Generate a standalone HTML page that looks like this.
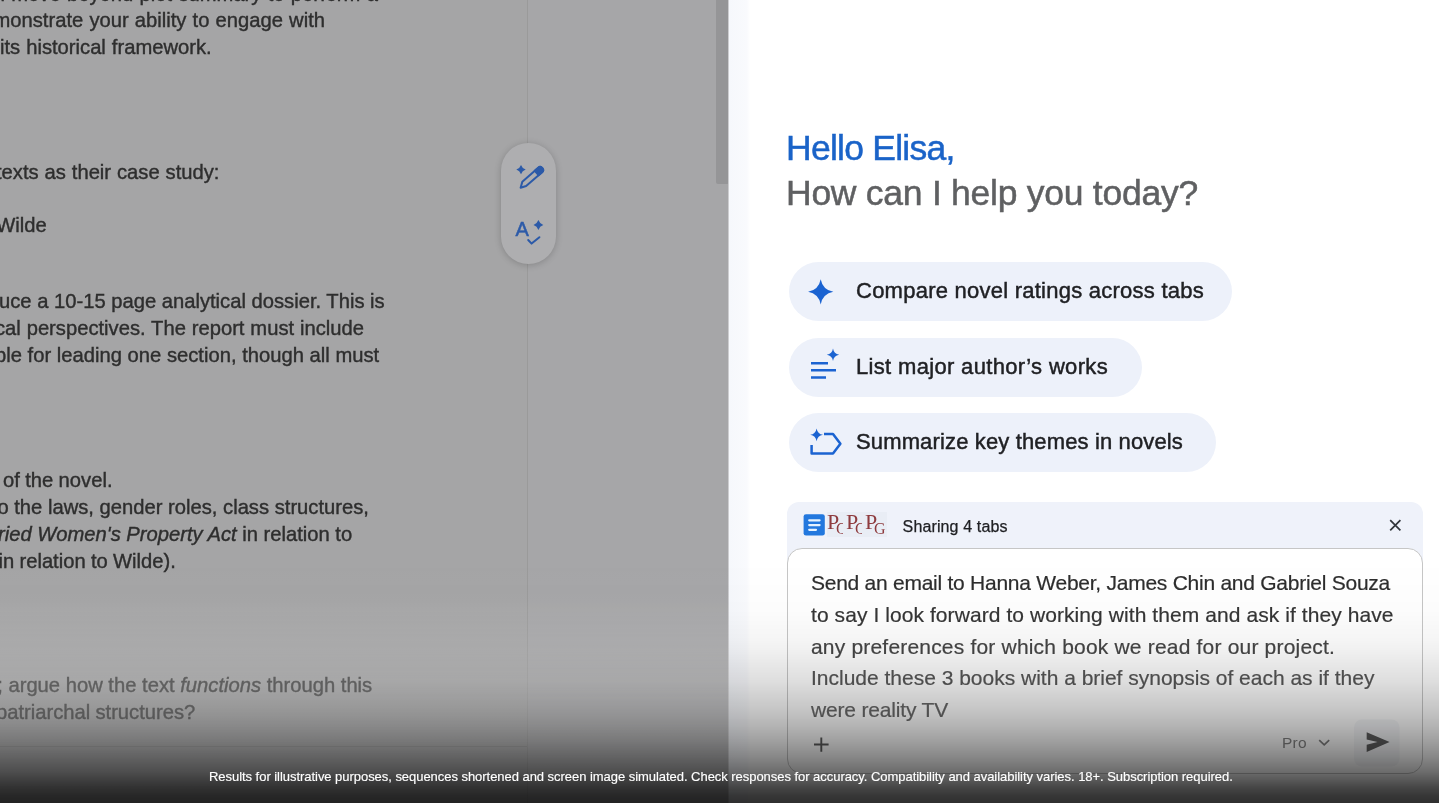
<!DOCTYPE html>
<html>
<head>
<meta charset="utf-8">
<style>
*{margin:0;padding:0;box-sizing:border-box;}
html,body{width:1439px;height:803px;overflow:hidden;background:#a5a5a6;font-family:"Liberation Sans",sans-serif;}
#root{position:absolute;left:0;top:0;width:1439px;height:803px;overflow:hidden;}
.h1,.chip,#share,#input,#cap,#pro,#pillicons{will-change:transform;}
/* LEFT DOCUMENT */
#doc{position:absolute;left:0;top:0;width:729px;height:803px;background:#a5a5a6;overflow:hidden;}
#doc .side{position:absolute;left:528px;top:0;width:201px;height:803px;background:#a6a6a8;}
#doc .vline{position:absolute;left:527px;top:0;width:1px;height:803px;background:#9a9a9a;}
#doc .scroll{position:absolute;left:715.5px;top:-10px;width:13px;height:193.5px;background:#959597;border-radius:2px;}
#doctext{position:absolute;left:0;top:0;width:528px;height:803px;filter:blur(0.75px);}
.dl{position:absolute;white-space:nowrap;font-size:20.2px;line-height:27px;color:#2e2e2e;-webkit-text-stroke:0.4px #2e2e2e;height:27px;}
.dl i{font-style:italic;}
#pill{position:absolute;left:501px;top:143px;width:55px;height:121px;border-radius:28px;background:#aeaeb0;box-shadow:0 1px 7px rgba(0,0,0,0.2);}
/* RIGHT PANEL */
#panel{position:absolute;left:729px;top:0;width:710px;height:803px;background:#ffffff;}
#panel .edge{position:absolute;left:0;top:0;width:21px;height:803px;background:linear-gradient(to right,#f6f8fc 0,#f9fafd 85%,#ffffff 100%);}
.h1{position:absolute;left:786px;white-space:nowrap;font-size:35.5px;line-height:44px;height:44px;-webkit-text-stroke:0.5px currentColor;}
.chip{position:absolute;left:789px;height:59px;border-radius:30px;background:#edf1fa;}
.chip span{position:absolute;left:67px;top:-1px;line-height:59px;font-size:22px;color:#202124;white-space:nowrap;-webkit-text-stroke:0.45px #202124;}
.chip svg{position:absolute;}
#share{position:absolute;left:787px;top:502px;width:636px;height:62px;border-radius:12px 12px 0 0;background:#eff2fa;}
#share .t{position:absolute;left:115.6px;top:1px;line-height:47px;font-size:16px;letter-spacing:0.129px;color:#202124;white-space:nowrap;-webkit-text-stroke:0.25px #202124;}
.pg{position:absolute;top:10px;height:26px;overflow:hidden;font-family:"Liberation Serif",serif;color:#8e3b3e;}
.pg b{position:absolute;left:3px;top:-3px;font-weight:normal;font-size:22px;line-height:26px;}
.pg i{position:absolute;left:12px;top:6px;font-style:normal;font-size:16px;line-height:22px;}
#input{position:absolute;left:787px;top:548px;width:636px;height:226px;border-radius:15px;background:#fff;border:1px solid #c6c6c6;}
.il{position:absolute;left:23px;white-space:nowrap;font-size:21px;line-height:32px;height:32px;color:#444746;}
#pro{position:absolute;left:1281.5px;top:734px;font-size:15.5px;line-height:18px;color:#858585;letter-spacing:0.2px;}
#fade{position:absolute;left:0;top:560px;width:1439px;height:243px;pointer-events:none;
background:linear-gradient(to bottom,rgba(0,0,0,0) 0.0%,rgba(0,0,0,0.01) 20.58%,rgba(0,0,0,0.04) 32.92%,rgba(0,0,0,0.06) 37.45%,rgba(0,0,0,0.13) 49.79%,rgba(0,0,0,0.23) 62.14%,rgba(0,0,0,0.3) 68.72%,rgba(0,0,0,0.38) 74.9%,rgba(0,0,0,0.47) 81.07%,rgba(0,0,0,0.575) 87.24%,rgba(0,0,0,0.72) 93.42%,rgba(0,0,0,0.79) 97.12%,rgba(0,0,0,0.81) 100.0%);}
#dfade{position:absolute;left:0;top:560px;width:729px;height:243px;pointer-events:none;
background:linear-gradient(to bottom,rgba(255,255,255,0) 0.0%,rgba(255,255,255,0.02) 16.46%,rgba(255,255,255,0.13) 32.92%,rgba(255,255,255,0.3) 49.38%,rgba(255,255,255,0.34) 57.61%,rgba(255,255,255,0.34) 65.84%,rgba(255,255,255,0.3) 74.07%,rgba(255,255,255,0.22) 82.3%,rgba(255,255,255,0.18) 90.53%,rgba(255,255,255,0.2) 100.0%);}
#cap{position:absolute;left:209.2px;top:769px;-webkit-text-stroke:0.15px #fff;letter-spacing:-0.042px;font-size:13px;line-height:16px;color:#fff;white-space:nowrap;}
</style>
</head>
<body>
<div id="root">
  <div id="doc">
    <div class="side"></div>
    <div class="vline"></div>
    <div class="scroll"></div>
    <div style="position:absolute;left:728px;top:0;width:1px;height:803px;background:#cdcdd0;"></div>
    <div style="position:absolute;left:0;top:746px;width:527px;height:1px;background:rgba(0,0,0,0.10);"></div>
    <div id="doctext">
      <div class="dl" style="left:-4px;top:-19.4px;word-spacing:0.71px;">ll move beyond plot summary to perform a</div>
      <div class="dl" style="left:-6.5px;top:7px;word-spacing:0.54px;">monstrate your ability to engage with</div>
      <div class="dl" style="left:0px;top:34px;word-spacing:0.4px;">its historical framework.</div>
      <div class="dl" style="left:-4px;top:159px;word-spacing:0.31px;">texts as their case study:</div>
      <div class="dl" style="left:-3.8px;top:212px;word-spacing:0px;">Wilde</div>
      <div class="dl" style="left:-1px;top:288px;word-spacing:0.0px;">uce a 10-15 page analytical dossier. This is</div>
      <div class="dl" style="left:-5px;top:315px;word-spacing:0.25px;">cal perspectives. The report must include</div>
      <div class="dl" style="left:-5px;top:342px;word-spacing:0.05px;">ble for leading one section, though all must</div>
      <div class="dl" style="left:3px;top:467px;word-spacing:-0.25px;">of the novel.</div>
      <div class="dl" style="left:-2.6px;top:494px;word-spacing:0.02px;">o the laws, gender roles, class structures,</div>
      <div class="dl" style="left:-2px;top:521px;word-spacing:-0.02px;"><i>ried Women's Property Act</i> in relation to</div>
      <div class="dl" style="left:-1.5px;top:548px;word-spacing:-0.37px;">in relation to Wilde).</div>
      <div class="dl" style="left:-2.8px;top:672px;word-spacing:0.02px;">; argue how the text <i>functions</i> through this</div>
      <div class="dl" style="left:-4px;top:699px;word-spacing:-0.42px;">patriarchal structures?</div>
    </div>
    <div id="pill"></div>
      <svg id="pillicons" style="position:absolute;left:495px;top:135px;" width="70" height="135" viewBox="495 135 70 135">
    <g fill="none" stroke="#2c5aa8" stroke-width="2" stroke-linecap="round" stroke-linejoin="round">
      <g transform="translate(531.4,177.6) rotate(-41)">
        <path d="M-14.8,0.6 L-9.5,-2.9 L11.6,-2.9 A2.9,2.9 0 0 1 11.6,2.9 L-9.5,2.9 Z"/>
        <path d="M7,-2.9 L11.6,-2.9 A2.9,2.9 0 0 1 11.6,2.9 L7,2.9 Z" fill="#2c5aa8"/>
      </g>
      <polyline points="528.2,240 531.6,243.6 539.4,237.2"/>
    </g>
    <path d="M521,164.9 Q522.22,168.38 525.7,169.6 Q522.22,170.82 521,174.29999999999998 Q519.78,170.82 516.3,169.6 Q519.78,168.38 521,164.9Z" fill="#2c5aa8"/>
    <path d="M538.4,220.1 Q539.67,223.73 543.3,225 Q539.67,226.27 538.4,229.9 Q537.13,226.27 533.5,225 Q537.13,223.73 538.4,220.1Z" fill="#2c5aa8"/>
    <text x="515.6" y="236.2" font-family="Liberation Sans, sans-serif" font-size="20" fill="#2c5aa8" stroke="#2c5aa8" stroke-width="0.5">A</text>
  </svg>
    <div id="dfade"></div>
  </div>

  <div id="panel"><div class="edge"></div></div>

  <div class="h1" id="h1a" style="top:126px;color:#1a63c8;letter-spacing:-0.75px;">Hello Elisa,</div>
  <div class="h1" id="h1b" style="top:171px;color:#5f6062;letter-spacing:-0.26px;">How can I help you today?</div>

  <div class="chip" id="c1" style="top:262px;width:443px;"><span style="letter-spacing:0.244px">Compare novel ratings across tabs</span></div>
  <div class="chip" id="c2" style="top:338px;width:353px;"><span style="letter-spacing:0.331px">List major author’s works</span></div>
  <div class="chip" id="c3" style="top:413px;width:427px;"><span style="letter-spacing:0.14px">Summarize key themes in novels</span></div>

  <div id="share"><div style="position:absolute;left:40px;top:10px;width:60px;height:25px;background:rgba(120,130,140,0.045);"></div><div class="pg" style="left:37px;width:19px;"><b>P</b><i>G</i></div><div class="pg" style="left:56px;width:19px;"><b>P</b><i>G</i></div><div class="pg" style="left:75px;width:25px;"><b>P</b><i>G</i></div><div class="t">Sharing 4 tabs</div></div>
  <div id="input">
    <div class="il" id="il1" style="top:18.4px;color:#2e2e2e;-webkit-text-stroke:0.2px #2e2e2e;letter-spacing:-0.255px;">Send an email to Hanna Weber, James Chin and Gabriel Souza</div>
    <div class="il" id="il2" style="top:49.9px;color:#363636;-webkit-text-stroke:0.2px #363636;letter-spacing:0.075px;">to say I look forward to working with them and ask if they have</div>
    <div class="il" id="il3" style="top:81.5px;color:#464646;-webkit-text-stroke:0.2px #464646;letter-spacing:0.189px;">any preferences for which book we read for our project.</div>
    <div class="il" id="il4" style="top:113px;color:#585858;-webkit-text-stroke:0.2px #585858;letter-spacing:-0.007px;">Include these 3 books with a brief synopsis of each as if they</div>
    <div class="il" id="il5" style="top:144.5px;color:#6a6a6a;-webkit-text-stroke:0.2px #6a6a6a;letter-spacing:-0.178px;">were reality TV</div>
  </div>

    <svg id="icons" style="position:absolute;left:780px;top:250px;" width="659" height="553" viewBox="780 250 659 553">
    <!-- chip 1 sparkle -->
    <path d="M820.7,279.2 Q822.716,289.784 833.3000000000001,291.8 Q822.716,293.81600000000003 820.7,304.40000000000003 Q818.6840000000001,293.81600000000003 808.1,291.8 Q818.6840000000001,289.784 820.7,279.2Z" fill="#1b63d1"/>
    <!-- chip 2: list + sparkle -->
    <g stroke="#1b63d1" stroke-width="2.5" stroke-linecap="butt" fill="none">
      <path d="M811,363.2 H828 M811,370.3 H836 M811,377.5 H826"/>
    </g>
    <path d="M833,348.6 Q833.868,353.932 839.2,354.8 Q833.868,355.668 833,361.0 Q832.132,355.668 826.8,354.8 Q832.132,353.932 833,348.6Z" fill="#1b63d1"/>
    <!-- chip 3: tag + sparkle -->
    <path d="M811.6,445 V453.6 H833 L840.4,443.8 L833,434 H824" fill="none" stroke="#1b63d1" stroke-width="2.5" stroke-linejoin="round" stroke-linecap="butt"/>
    <path d="M816.6,428.40000000000003 Q817.496,433.904 823.0,434.8 Q817.496,435.696 816.6,441.2 Q815.7040000000001,435.696 810.2,434.8 Q815.7040000000001,433.904 816.6,428.40000000000003Z" fill="#1b63d1"/>
    <!-- docs icon -->
    <rect x="803.6" y="514.2" width="21.2" height="21.4" rx="2.4" fill="#2378de"/>
    <g stroke="#e6f3ff" stroke-width="2.2" stroke-linecap="round">
      <path d="M809.2,520.3 H819.6 M809.2,525.1 H819.6 M809.2,529.8 H816"/>
    </g>
    <!-- close x -->
    <path d="M1390.2,520.2 L1400.4,530.4 M1400.4,520.2 L1390.2,530.4" stroke="#30343a" stroke-width="1.7" fill="none"/>
    <!-- plus -->
    <path d="M814,744.5 H828.6 M821.3,737.4 V751.8" stroke="#5e5e5e" stroke-width="1.9" fill="none"/>
    <!-- chevron -->
    <path d="M1319.2,740.2 L1324.2,744.8 L1329.2,740.2" stroke="#808080" stroke-width="1.7" fill="none"/>
    <!-- send button -->
    <rect x="1354" y="719.5" width="45.5" height="47" rx="8" fill="rgba(170,180,200,0.10)"/>
    <path transform="translate(1364.5,729) scale(1.09)" d="M2.01 21L23 12 2.01 3 2 9.6l10 2.4-10 2.4z" fill="#606060"/>
  </svg>
  <div id="pro">Pro</div>
  <div id="fade"></div>
  <div id="cap">Results for illustrative purposes, sequences shortened and screen image simulated. Check responses for accuracy. Compatibility and availability varies. 18+. Subscription required.</div>
</div>
</body>
</html>
